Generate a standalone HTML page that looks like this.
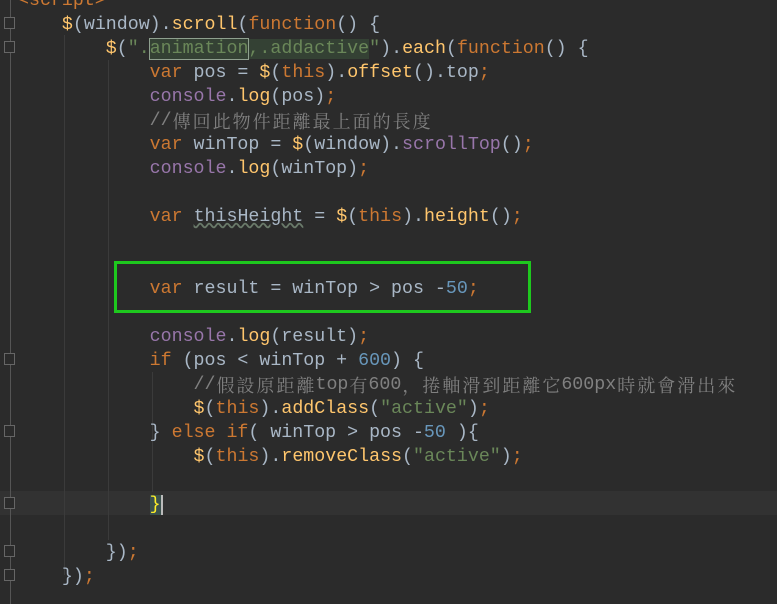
<!DOCTYPE html>
<html><head><meta charset="utf-8"><style>
body{margin:0;width:777px;height:604px;background:#2b2b2b;overflow:hidden;position:relative;font-family:"Liberation Mono","Noto Sans CJK TC",monospace;font-size:18.3px;color:#a9b7c6}
.l{position:absolute;left:18px;height:24px;line-height:24px;white-space:pre;margin-top:2px;overflow:visible}
.k{color:#cc7832}.f{color:#ffc66d}.p{color:#9876aa}.n{color:#6897bb}.s{color:#6a8759}.cm{color:#808080}
.c{display:inline-block;width:20px;height:24px;line-height:24px;vertical-align:top;overflow:hidden;text-align:center;font-family:"Noto Serif CJK SC","Noto Sans CJK TC",serif;font-size:18px}
.cur{position:absolute;left:0;top:491px;width:777px;height:24px;background:#323232}
.g{position:absolute;left:10px;top:0;width:1px;height:604px;background:#555}
.ig{position:absolute;width:1px;background:#3b3b3b}
.fold{position:absolute;left:4px;width:11px;height:12px;border:1px solid #666;background:#2b2b2b;box-sizing:border-box}
.box{position:absolute;left:114px;top:261px;width:417px;height:52px;border:3px solid #1ec81e;box-sizing:border-box}
</style></head><body>
<div class="cur"></div>
<div class="g"></div>
<div class="ig" style="left:64px;top:35px;height:540px"></div>
<div class="ig" style="left:108px;top:60px;height:480px"></div>
<div class="ig" style="left:152px;top:372px;height:120px"></div>
<div class="fold" style="top:17px"></div>
<div class="fold" style="top:41px"></div>
<div class="fold" style="top:353px"></div>
<div class="fold" style="top:425px"></div>
<div class="fold" style="top:497px"></div>
<div class="fold" style="top:545px"></div>
<div class="fold" style="top:569px"></div>
<div class="l" style="top:-13px"><span class="k">&lt;script&gt;</span></div>
<div class="l" style="top:11px">    <span class="f">$</span>(window).<span class="f">scroll</span>(<span class="k">function</span>() {</div>
<div class="l" style="top:35px">        <span class="f">$</span>(<span class="s">".<span style="background:#344134;outline:1px solid #8fa08f">animation</span><span style="background:#344134">,.addactive</span>"</span>).<span class="f">each</span>(<span class="k">function</span>() {</div>
<div class="l" style="top:59px">            <span class="k">var</span> pos = <span class="f">$</span>(<span class="k">this</span>).<span class="f">offset</span>().top<span class="k">;</span></div>
<div class="l" style="top:83px">            <span class="p">console</span>.<span class="f">log</span>(pos)<span class="k">;</span></div>
<div class="l cm" style="top:107px">            //<span class="c">傳</span><span class="c">回</span><span class="c">此</span><span class="c">物</span><span class="c">件</span><span class="c">距</span><span class="c">離</span><span class="c">最</span><span class="c">上</span><span class="c">面</span><span class="c">的</span><span class="c">長</span><span class="c">度</span></div>
<div class="l" style="top:131px">            <span class="k">var</span> winTop = <span class="f">$</span>(window).<span class="p">scrollTop</span>()<span class="k">;</span></div>
<div class="l" style="top:155px">            <span class="p">console</span>.<span class="f">log</span>(winTop)<span class="k">;</span></div>
<div class="l" style="top:203px">            <span class="k">var</span> <span style="text-decoration:underline wavy #6a7a6a">thisHeight</span> = <span class="f">$</span>(<span class="k">this</span>).<span class="f">height</span>()<span class="k">;</span></div>
<div class="l" style="top:275px">            <span class="k">var</span> result = winTop &gt; pos -<span class="n">50</span><span class="k">;</span></div>
<div class="l" style="top:323px">            <span class="p">console</span>.<span class="f">log</span>(result)<span class="k">;</span></div>
<div class="l" style="top:347px">            <span class="k">if</span> (pos &lt; winTop + <span class="n">600</span>) {</div>
<div class="l cm" style="top:371px">                //<span class="c">假</span><span class="c">設</span><span class="c">原</span><span class="c">距</span><span class="c">離</span>top<span class="c">有</span>600<span class="c">，</span><span class="c">捲</span><span class="c">軸</span><span class="c">滑</span><span class="c">到</span><span class="c">距</span><span class="c">離</span><span class="c">它</span>600px<span class="c">時</span><span class="c">就</span><span class="c">會</span><span class="c">滑</span><span class="c">出</span><span class="c">來</span></div>
<div class="l" style="top:395px">                <span class="f">$</span>(<span class="k">this</span>).<span class="f">addClass</span>(<span class="s">"active"</span>)<span class="k">;</span></div>
<div class="l" style="top:419px">            } <span class="k">else if</span>( winTop &gt; pos -<span class="n">50</span> ){</div>
<div class="l" style="top:443px">                <span class="f">$</span>(<span class="k">this</span>).<span class="f">removeClass</span>(<span class="s">"active"</span>)<span class="k">;</span></div>
<div class="l" style="top:491px">            <span style="color:#ffef28;background:#3b514d;border-right:2px solid #bbb">}</span></div>
<div class="l" style="top:539px">        })<span class="k">;</span></div>
<div class="l" style="top:563px">    })<span class="k">;</span></div>
<div class="box"></div>
</body></html>
